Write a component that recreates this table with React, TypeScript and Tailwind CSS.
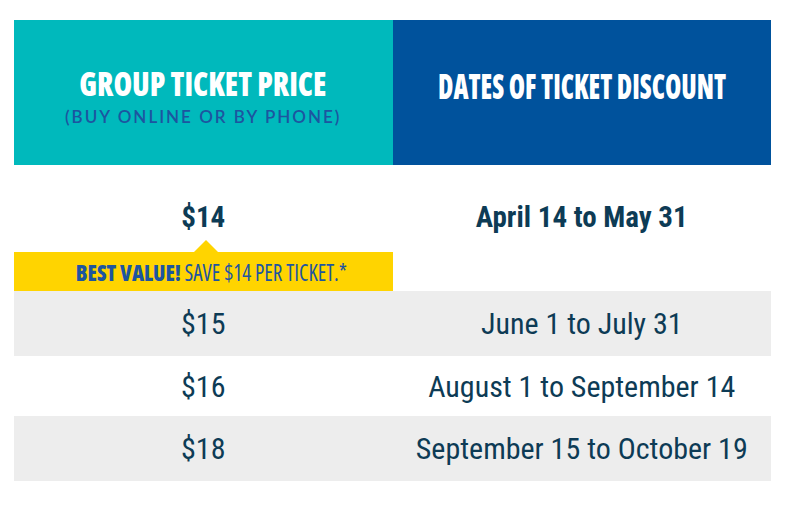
import React from "react";

const rows = [
  { price: "$15", dates: "June 1 to July 31", shade: true },
  { price: "$16", dates: "August 1 to September 14", shade: false },
  { price: "$18", dates: "September 15 to October 19", shade: true },
];

const App = () => {
  return (
    <div className="w-[785px] h-[513px] bg-white pt-[20px] px-[14px] font-['Roboto',sans-serif] font-stretch-condensed">
      <div className="w-[757px]">
        <div className="grid grid-cols-2 h-[145px]">
          <div className="bg-[#00b9bc] flex flex-col items-center justify-center">
            <div className="text-white font-extrabold text-[33px] leading-none pt-[6px] whitespace-nowrap font-['Open_Sans',sans-serif] font-stretch-extra-condensed scale-x-[0.91]">
              GROUP TICKET PRICE
            </div>
            <div className="text-[#1d55a0] text-[17px] leading-none mt-[8px] tracking-[2px] font-['Lato',sans-serif] font-semibold font-stretch-normal whitespace-nowrap">
              (BUY ONLINE OR BY PHONE)
            </div>
          </div>
          <div className="bg-[#00529c] flex items-center justify-center">
            <div className="text-white font-extrabold text-[35px] leading-none pb-[14px] whitespace-nowrap font-['Open_Sans',sans-serif] font-stretch-extra-condensed scale-x-[0.75]">
              DATES OF TICKET DISCOUNT
            </div>
          </div>
        </div>

        <div className="grid grid-cols-2 h-[87px] text-[#0d3b55] font-bold text-[29px]">
          <div className="flex items-center justify-center pt-[18px]">$14</div>
          <div className="flex items-center justify-center pt-[18px]">April 14 to May 31</div>
        </div>

        <div className="grid grid-cols-2 h-[39px]">
          <div className="relative bg-[#ffd400] flex items-center justify-center pt-[2px] pl-[16px]">
            <div className="absolute left-[180px] top-[-12px] w-0 h-0 border-l-[12px] border-r-[12px] border-b-[12px] border-l-transparent border-r-transparent border-b-[#ffd400]" />
            <div className="text-[#1d55a0] text-[23px] leading-none font-['Open_Sans',sans-serif] font-stretch-extra-condensed whitespace-nowrap scale-x-[0.92]">
              <span className="font-extrabold">BEST VALUE!</span> SAVE $14 PER TICKET.*
            </div>
          </div>
          <div />
        </div>

        {rows.map((r, i) => (
          <div
            key={r.price}
            className={`grid grid-cols-2 ${i === 1 ? "h-[60px]" : "h-[65px]"} ${r.shade ? "bg-[#ededed]" : "bg-white"} text-[#0d3b55] text-[30px]`}
          >
            <div className="flex items-center justify-center">{r.price}</div>
            <div className="flex items-center justify-center">{r.dates}</div>
          </div>
        ))}
      </div>
    </div>
  );
};

export default App;
